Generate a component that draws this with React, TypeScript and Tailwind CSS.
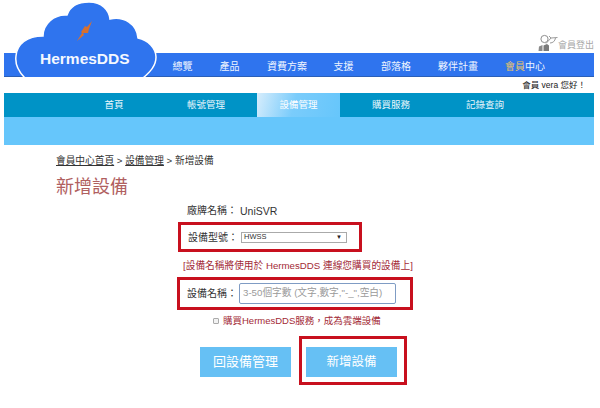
const FONT = 'font-["Liberation_Sans","Noto_Sans_CJK_TC",sans-serif]';

function Cloud() {
  return (
    <div className="absolute left-[14px] top-0 w-[144px] h-[77px] overflow-hidden">
      <svg width="144" height="77" viewBox="0 0 144 77">
        <path
          d="M11 78 C4 71 1 63 2 56 C3 44 13 36 29 36 C29 24 40 14 53 15 C56 6 65 2 75 2 C88 2 95 10 96 19 C110 16 123 24 124 38 C134 40 142 48 142 57 C142 66 136 72 129 78 Z"
          fill="#2f74ee"
          stroke="#ffffff"
          strokeWidth="1.5"
        />
        <path d="M78 21 L73 27 L71 26 L67 32 L68 33 L63 41 L70 35 L69 33 L74 33 L75 29 Z" fill="#d8702f" />
      </svg>
      <div className="absolute left-[26px] top-[50px] text-[15.5px] leading-[18px] font-bold text-[#f4f8ff] whitespace-nowrap">HermesDDS</div>
    </div>
  );
}

function LogoutIcon() {
  return (
    <svg width="20" height="18" viewBox="0 0 20 18" className="shrink-0">
      <circle cx="6.5" cy="5" r="3.6" fill="none" stroke="#8e8e8e" strokeWidth="1" />
      <path d="M0.5 17 L1 12.5 L4.5 11 L4.5 17 Z" fill="#8a8a8a" />
      <path d="M5.5 17 L5.5 11.5 L9 10 L11 11.5 L11 17 Z" fill="#7a7a7a" />
      <path d="M8 9.5 L13 4 L19.5 3.5 M13 4 L11 2 M12 9 C15 9 17 7 17.5 4" fill="none" stroke="#9a9a9a" strokeWidth="1" />
    </svg>
  );
}

const mainNav = [
  { label: "總覽", w: "w-[47px]" },
  { label: "產品", w: "w-[47px]" },
  { label: "資費方案", w: "w-[68px]" },
  { label: "支援", w: "w-[45px]" },
  { label: "部落格", w: "w-[60px]" },
  { label: "夥伴計畫", w: "w-[64px]" },
];

export default function App() {
  return (
    <div className={`relative w-[600px] h-[408px] bg-white overflow-hidden flex flex-col pl-[4px] pr-[6px] ${FONT}`}>
      <Cloud />
      <div className="h-[53px] flex items-end justify-end pb-[1px]">
        <LogoutIcon />
        <span className="text-[9px] leading-[12px] text-[#a8a8a8] mb-[1px] whitespace-nowrap">會員登出</span>
      </div>
      <nav className="h-[24px] bg-[#2f74ee] border-b border-[#2a5fb8] flex items-center pl-[155px] pt-[4px] text-[10px] text-[#eef4ff]">
        {mainNav.map((n) => (
          <span key={n.label} className={`${n.w} text-center`}>{n.label}</span>
        ))}
        <span className="w-[70px] text-center"><span className="text-[#e9c46a]">會員</span>中心</span>
      </nav>
      <div className="h-[16px] flex items-center justify-end pr-[8px] text-[8.5px] text-[#222]">會員 vera 您好！</div>
      <div className="h-[24px] bg-[#0093c6] flex items-stretch pl-[64px] text-[9.5px] text-[#eaf7fc]">
        <span className="w-[92px] flex items-center justify-center">首頁</span>
        <span className="w-[97px] flex items-center justify-center pr-[5px]">帳號管理</span>
        <span className="w-[83px] flex items-center justify-center bg-[linear-gradient(105deg,#d7edfc,#7accfb_45%,#66c6fb)] text-white">設備管理</span>
        <span className="w-[102px] flex items-center justify-center">購買服務</span>
        <span className="w-[86px] flex items-center justify-center">記錄查詢</span>
      </div>
      <div className="h-[28px] bg-[#66c6fb]" />

      <div className="pl-[52px] mt-[10px] text-[9.7px] leading-[12px] text-[#333]">
        <span className="underline">會員中心首頁</span> &gt; <span className="underline">設備管理</span> &gt; 新增設備
      </div>
      <h1 className="pl-[52px] mt-[9px] text-[18px] leading-[22px] font-normal text-[#b0605f]">新增設備</h1>

      <div className="flex flex-col items-start mt-[6px] text-[#333]">
        <div className="ml-[183px] text-[10px] leading-[14px] flex items-center whitespace-nowrap">
          <span className="w-[53px]">廠牌名稱：</span><span className="text-[10.5px]">UniSVR</span>
        </div>
        <div className="ml-[174px] mt-[4px] w-[184px] h-[30px] border-[3px] border-[#c8101e] pl-[7px] flex items-center text-[10px]">
          <span className="w-[53px] whitespace-nowrap">設備型號：</span>
          <div className="w-[106px] h-[11px] border border-[#aaa] flex items-center justify-between px-[2px] text-[7.5px] bg-white">
            <span>HWSS</span><span className="text-[6px] text-[#222] pr-[2px]">▼</span>
          </div>
        </div>
        <div className="ml-[179px] mt-[7px] text-[9.7px] leading-[14px] text-[#a32a36] whitespace-nowrap">[設備名稱將使用於 HermesDDS 連線您購買的設備上]</div>
        <div className="ml-[173px] mt-[4px] w-[236px] h-[33px] border-[3px] border-[#c8101e] pl-[7px] flex items-center text-[10px]">
          <span className="w-[52px] whitespace-nowrap">設備名稱：</span>
          <div className="w-[157px] h-[21px] border border-[#7f9cc4] rounded-[2px] flex items-center px-[3px] text-[9.7px] text-[#9a9a9a] whitespace-nowrap bg-white">3-50個字數 (文字,數字,"-_",空白)</div>
        </div>
        <div className="ml-[209px] mt-[4px] flex items-center gap-[4px] text-[9.5px] leading-[14px] text-[#a32a36] whitespace-nowrap">
          <span className="w-[6px] h-[6px] border border-[#aaa] bg-[#f2f2f2] rounded-[1px]" />
          <span>購買HermesDDS服務，成為雲端設備</span>
        </div>
        <div className="ml-[196px] mt-[8px] flex items-start gap-[8px]">
          <button className="w-[91px] h-[30px] mt-[11px] bg-[#66c0f4] text-white text-[13px]">回設備管理</button>
          <div className="w-[108px] h-[49px] border-[3px] border-[#c8101e] pl-[4px] pt-[8px]">
            <button className="w-[91px] h-[30px] block bg-[#66c0f4] text-white text-[12.5px]">新增設備</button>
          </div>
        </div>
      </div>
    </div>
  );
}
